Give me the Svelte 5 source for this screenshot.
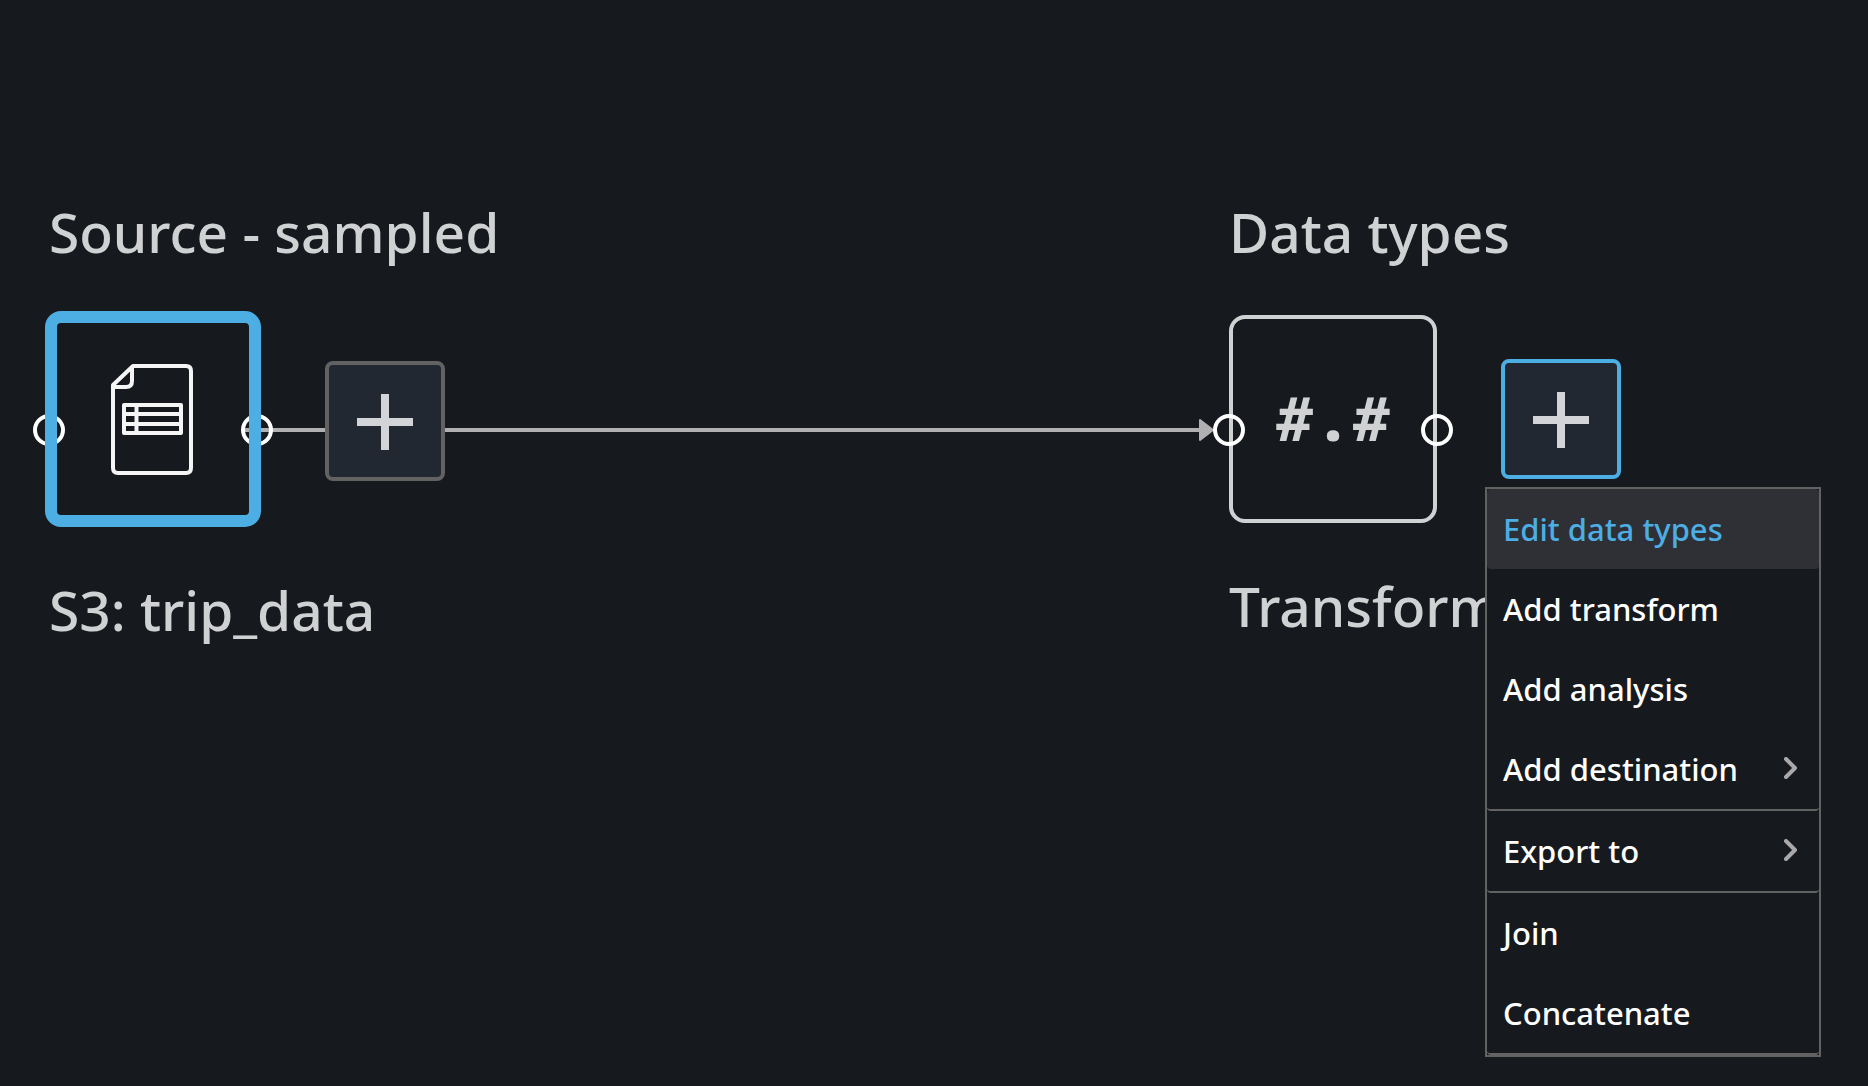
<script>
  const menu = [
    { label: 'Edit data types', active: true },
    { label: 'Add transform' },
    { label: 'Add analysis' },
    { label: 'Add destination', submenu: true, divider: true },
    { label: 'Export to', submenu: true, divider: true },
    { label: 'Join' },
    { label: 'Concatenate', divider: true }
  ];
</script>

{#snippet plus()}
  <svg class="plus" viewBox="0 -2 56 58" aria-hidden="true">
    <path d="M24 0h8v24h24v8H32v24h-8V32H0v-8h24z" fill="currentColor" />
  </svg>
{/snippet}

<main class="canvas">
  <svg class="edge" viewBox="0 0 970 24" aria-hidden="true">
    <path d="M0 12H956" stroke="#b0b0b3" stroke-width="4" />
    <path d="M955 2L968 12L955 22Z" fill="#b0b0b3" stroke="#b0b0b3" stroke-width="2" stroke-linejoin="round" />
  </svg>

  <section class="node source">
    <h2>Source - sampled</h2>
    <div class="box selected">
      <svg class="file" viewBox="0 -2 84 114" fill="none" stroke="#f5f5f6" stroke-width="4" role="img" aria-label="Data file">
        <path d="M22 2H75Q80 2 80 7V104Q80 109 75 109H7Q2 109 2 104V21Z" stroke-linejoin="round" />
        <path d="M2 23H15Q21 23 21 17V3" />
        <path d="M13 41H70V69H13ZM13 50H70M13 60H70M25.500 41V69" stroke-linejoin="round" />
      </svg>
    </div>
    <p>S3: trip_data</p>
    <span class="port in"></span>
    <span class="port out"></span>
  </section>

  <section class="node types">
    <h2>Data types</h2>
    <div class="box"><span class="glyph">#<b>.</b>#</span></div>
    <p>Transform</p>
    <span class="port in"></span>
    <span class="port out"></span>
  </section>

  <button class="add first" aria-label="Add step after source">{@render plus()}</button>
  <button class="add open" aria-label="Add step after data types" aria-expanded="true">{@render plus()}</button>

  <div class="menu" role="menu">
    {#each menu as item}
      <button role="menuitem" class:active={item.active} class:divider={item.divider}>
        <span>{item.label}</span>
        {#if item.submenu}
          <svg class="chevron" viewBox="0 0 14 24" fill="none" stroke="#a9a9ab" stroke-width="4" stroke-linecap="round" stroke-linejoin="round" aria-hidden="true">
            <path d="M3 2L12 11L3 20" />
          </svg>
        {/if}
      </button>
    {/each}
  </div>
</main>

<style>
  :global(body) {
    margin: 0;
    background: #16191e;
  }
  .canvas {
    position: relative;
    min-height: 100vh;
    overflow: hidden;
    background: #16191e;
    color: #d0d1d3;
    font-family: 'Noto Sans', 'Open Sans', sans-serif;
  }
  .node {
    position: absolute;
    top: 200px;
    width: 208px;
  }
  .source { left: 49px; }
  .types { left: 1229px; }
  h2, p {
    margin: 0;
    font-size: 55px;
    font-weight: 500;
    line-height: 64px;
    white-space: nowrap;
  }
  .box {
    box-sizing: border-box;
    display: flex;
    align-items: center;
    justify-content: center;
    width: 208px;
    height: 208px;
    margin: 51px 0;
    border: 4px solid #d0d1d3;
    border-radius: 16px;
  }
  .box.selected {
    position: relative;
    z-index: 1;
    width: 216px;
    height: 216px;
    margin: 47px -4px 51px;
    border: 12px solid #4caee3;
  }
  .file {
    width: 84px;
    height: 114px;
  }
  .glyph {
    font: bold 61px/72px 'DejaVu Sans Mono', monospace;
  }
  .glyph b {
    display: inline-block;
    width: 40px;
    font-family: 'Noto Sans', sans-serif;
    text-align: center;
  }
  .port {
    position: absolute;
    top: 214px;
    box-sizing: border-box;
    width: 32px;
    height: 32px;
    border: 4px solid #fff;
    border-radius: 50%;
  }
  .in { left: -16px; }
  .out { right: -16px; }
  .edge {
    position: absolute;
    left: 245px;
    top: 418px;
    width: 970px;
    height: 24px;
  }
  button {
    margin: 0;
    font: inherit;
    color: inherit;
    cursor: pointer;
  }
  .add {
    position: absolute;
    box-sizing: border-box;
    display: flex;
    align-items: center;
    justify-content: center;
    width: 120px;
    height: 120px;
    padding: 0;
    border: 4px solid #626262;
    border-radius: 8px;
    background: #212832;
    color: #d3d4d7;
  }
  .first { left: 325px; top: 361px; }
  .open {
    left: 1501px;
    top: 359px;
    border-color: #4caee3;
  }
  .plus {
    width: 56px;
    height: 58px;
  }
  .menu {
    position: absolute;
    left: 1485px;
    top: 487px;
    box-sizing: border-box;
    width: 336px;
    border: 2px solid #626262;
    background: #16191e;
  }
  .menu button {
    display: flex;
    align-items: center;
    justify-content: space-between;
    box-sizing: content-box;
    width: 294px;
    height: 80px;
    padding: 0 22px 0 16px;
    border: 0;
    border-radius: 4px;
    background: transparent;
    color: #fff;
    font-size: 31px;
    font-weight: 500;
    line-height: 44px;
    white-space: nowrap;
  }
  .menu button.active {
    background: #2f3035;
    color: #4caee3;
  }
  .menu button.divider {
    border-bottom: 2px solid #626262;
  }
  .chevron {
    width: 14px;
    height: 24px;
  }
</style>
